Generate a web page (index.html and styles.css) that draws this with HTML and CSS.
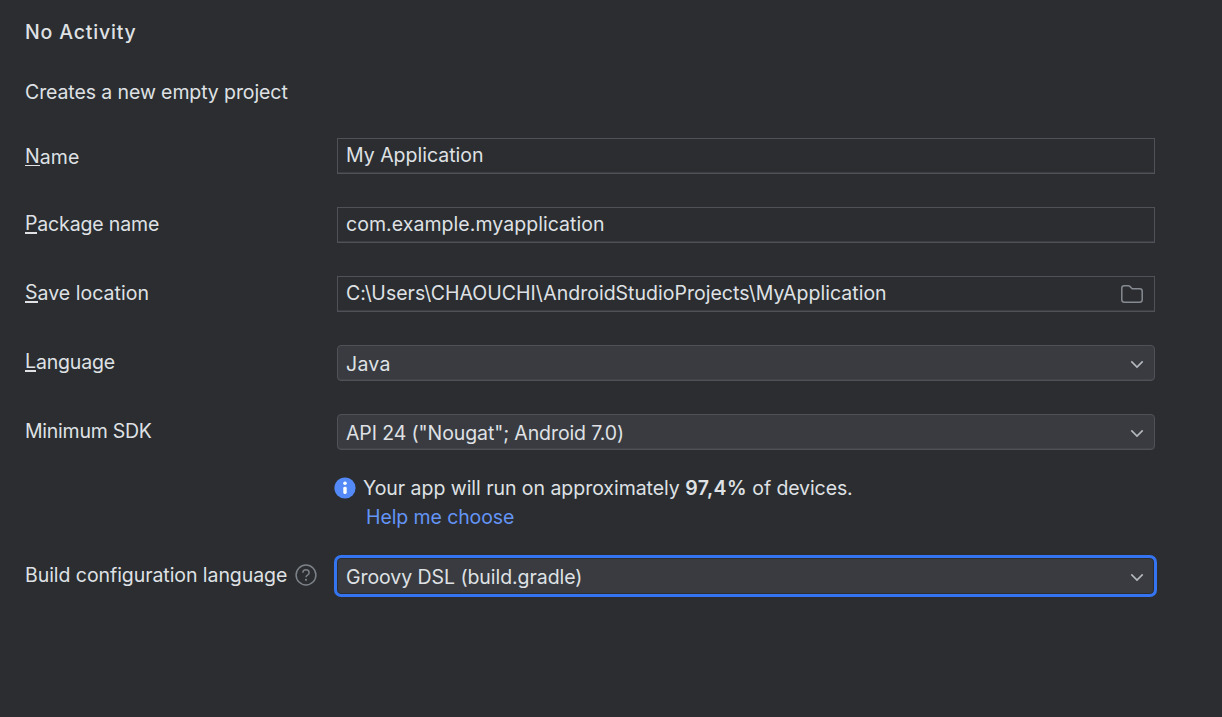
FILE: index.html
```html
<!DOCTYPE html>
<html lang="en">
<head>
<meta charset="utf-8">
<title>No Activity</title>
<link rel="stylesheet" href="styles.css">
</head>
<body>
<main class="wizard">
  <h1 class="title">No Activity</h1>
  <p class="description">Creates a new empty project</p>
  <form class="form">
    <div class="row">
      <label class="label label-name"><span class="key">N</span>ame</label>
      <div class="field"><span class="text t-name">My Application</span></div>
    </div>
    <div class="row">
      <label class="label label-package"><span class="key key-bold">P</span>ackage name</label>
      <div class="field"><span class="text t-package">com.example.myapplication</span></div>
    </div>
    <div class="row">
      <label class="label label-save"><span class="key key-bold">S</span>ave location</label>
      <div class="field"><span class="text t-path">C:\Users\CHAOUCHI\AndroidStudioProjects\MyApplication</span>
        <svg class="folder" width="22" height="18" viewBox="0 0 22 18"><path d="M.8 3.2Q.8.8 3.2.8H7.4Q8.2.8 8.8 1.4L11.2 3.8H18.8Q21.2 3.8 21.2 6.2V14.8Q21.2 17.2 18.8 17.2H3.2Q.8 17.2.8 14.8Z"/></svg>
      </div>
    </div>
    <div class="row">
      <label class="label label-language"><span class="key key-bold">L</span>anguage</label>
      <div class="field combo"><span class="text t-java">Java</span>
        <svg class="chevron" width="14" height="9" viewBox="0 0 14 9"><path d="M1.3 1.4 7 7.1 12.7 1.4"/></svg>
      </div>
    </div>
    <div class="row row-sdk">
      <label class="label label-sdk">Minimum SDK</label>
      <div class="field combo"><span class="text t-sdk">API 24 ("Nougat"; Android 7.0)</span>
        <svg class="chevron" width="14" height="9" viewBox="0 0 14 9"><path d="M1.3 1.4 7 7.1 12.7 1.4"/></svg>
      </div>
    </div>
    <div class="hint">
      <svg class="info" width="22" height="22" viewBox="0 0 22 22"><circle class="disc" cx="11" cy="11" r="10.6"/><circle class="mark" cx="11" cy="6.2" r="1.8"/><rect class="mark" x="9.3" y="9.8" width="3.4" height="7.2" rx="1.4"/></svg>
      <span class="hint-text">Your app will run on approximately <b class="percent">97,4%</b><span class="tail"> of devices.</span></span>
    </div>
    <a class="link">Help me choose</a>
    <div class="row row-build">
      <label class="label label-build">Build configuration language
        <svg class="help" width="22" height="22" viewBox="0 0 22 22"><circle cx="11" cy="11" r="9.9"/><path d="M7.9 8.8Q7.9 5.8 11 5.8T14.1 8.7Q14.1 10.2 12.5 11.1Q11 11.9 11 13.3"/><circle class="dot" cx="11" cy="15.8" r="1.1"/></svg>
      </label>
      <div class="field combo focused"><span class="text t-build">Groovy DSL (build.gradle)</span>
        <svg class="chevron" width="14" height="9" viewBox="0 0 14 9"><path d="M1.3 1.4 7 7.1 12.7 1.4"/></svg>
      </div>
    </div>
  </form>
</main>
</body>
</html>
```

FILE: styles.css
```css
* { box-sizing: border-box; }
body {
  margin: 0;
  min-height: 717px;
  background: #2b2d30;
  color: #dfe1e5;
  font: 19.5px/24px Inter, "Liberation Sans", sans-serif;
  white-space: nowrap;
}
svg { display: block; flex: none; fill: none; }
.wizard { padding: 20px 67px 0 25px; }
.title { margin: 0; font-size: 19.5px; line-height: 24px; font-weight: 550; letter-spacing: 0.82px; }
.description { margin: 36px 0 34px; letter-spacing: -0.1px; }
.form { display: flex; flex-direction: column; }
.row { display: grid; grid-template-columns: 312px 818px; height: 36px; margin-bottom: 33px; }
.label { display: flex; align-items: center; height: 34px; }
.label-name { height: 37px; letter-spacing: 0.05px; }
.label-package { letter-spacing: -0.15px; }
.label-save { letter-spacing: 0.03px; }
.label-language { letter-spacing: -0.15px; }
.label-sdk { letter-spacing: -0.25px; }
.key { border-bottom: 1px solid #dfe1e5; line-height: 18px; }
.key-bold { border-bottom-width: 2px; }
.field {
  display: flex;
  align-items: center;
  justify-content: space-between;
  height: 36px;
  padding: 0 11px 2px 8px;
  border: 1px solid #4e5157;
  box-shadow: inset 0 -1px 0 #3c3e43;
}
.t-name { letter-spacing: 0; }
.t-package { letter-spacing: 0.05px; }
.t-path { letter-spacing: 0.02px; }
.t-java { letter-spacing: 0.25px; }
.t-sdk { letter-spacing: -0.1px; }
.t-build { letter-spacing: -0.06px; }
.combo { padding: 2px 10px 0 8px; background: #393b40; border-radius: 4px; box-shadow: inset 0 -1px 0 #424449; }
.folder { stroke: #868a91; stroke-width: 1.5; margin-top: 2px; }
.chevron { stroke: #b4b8bf; stroke-width: 1.6; margin-top: 1px; }
.row-sdk { margin-bottom: 26px; }
.hint { display: flex; align-items: center; gap: 7px; margin-left: 309px; height: 24px; letter-spacing: -0.04px; }
.percent { font-weight: 600; letter-spacing: 0.4px; }
.tail { letter-spacing: -0.1px; }
.disc { fill: #548af7; }
.mark { fill: #fff; }
.link { margin: 5px 0 29px 341px; color: #6494f5; letter-spacing: -0.1px; }
.row-build { margin-bottom: 0; }
.label-build { gap: 8px; letter-spacing: -0.06px; }
.help { stroke: #7d8289; stroke-width: 1.5; }
.dot { fill: #7d8289; stroke: none; }
.focused { width: 817px; padding-right: 9px; border-color: #2b2d30; box-shadow: 0 0 0 3px #3574f0; }
```
